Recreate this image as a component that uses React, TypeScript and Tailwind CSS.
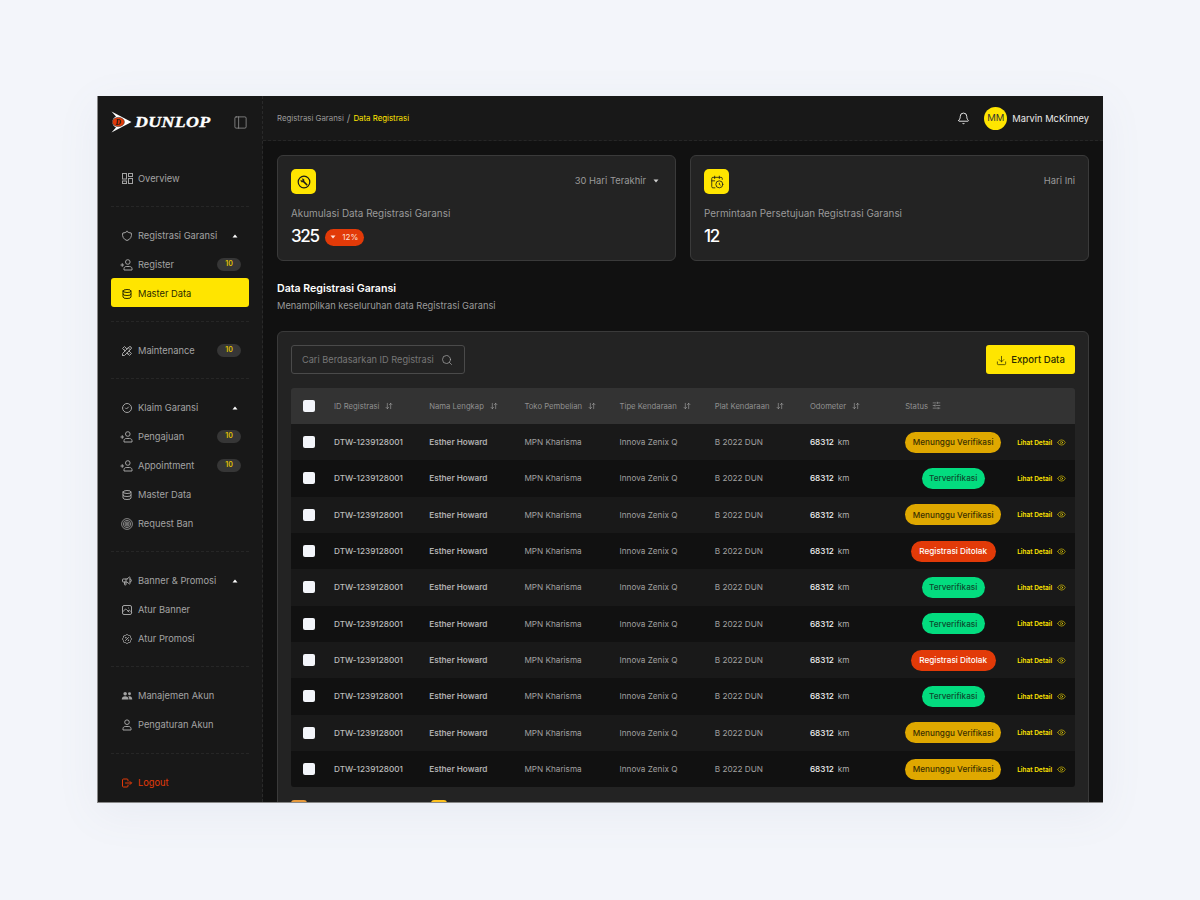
import React from "react";
import { PanelLeft, Bell, Search, Download, Eye, ArrowDownUp, SlidersHorizontal, CalendarClock } from "lucide-react";
import { TbShield, TbDatabase, TbTools, TbCircleCheck, TbSpeakerphone, TbPhoto, TbRosetteDiscount, TbLogout } from "react-icons/tb";

const Caret = ({ up = false, className = "" }: { up?: boolean; className?: string }) => (
  <svg width="6" height="4" viewBox="0 0 6 4" className={className}>
    <path d={up ? "M3 0.5L5.5 3.5H0.5Z" : "M3 3.5L5.5 0.5H0.5Z"} fill="currentColor" />
  </svg>
);

const Target = () => (
  <svg width="12" height="12" viewBox="0 0 12 12" fill="none" stroke="currentColor" strokeWidth="0.8">
    <circle cx="6" cy="6" r="5.4" />
    <circle cx="6" cy="6" r="3.6" />
    <circle cx="6" cy="6" r="2" />
    <circle cx="6" cy="6" r="0.7" />
  </svg>
);

const DashIcon = () => (
  <svg width="11" height="11" viewBox="0 0 11 11" fill="none" stroke="currentColor" strokeWidth="1">
    <rect x="0.5" y="0.5" width="4" height="5.5" />
    <rect x="6.5" y="0.5" width="4" height="3" />
    <rect x="0.5" y="8" width="4" height="2.5" />
    <rect x="6.5" y="5.5" width="4" height="5" />
  </svg>
);

const UserPlus = () => (
  <svg width="13" height="12" viewBox="0 0 13 12" fill="none" stroke="currentColor" strokeWidth="1" className="-ml-[1px]">
    <circle cx="7.8" cy="3" r="2.3" />
    <path d="M4 11V9.6C4 8.4 5 7.5 6.2 7.5H9.6C11 7.5 12 8.4 12 9.6V11Z" />
    <path d="M0.5 6H4M2.25 4.2V7.8" />
  </svg>
);

const UserIcon = () => (
  <svg width="12" height="12" viewBox="0 0 12 12" fill="none" stroke="currentColor" strokeWidth="1">
    <circle cx="6" cy="3.2" r="2.3" />
    <path d="M2 11V9.6C2 8.4 3 7.5 4.2 7.5H7.8C9 7.5 10 8.4 10 9.6V11Z" />
  </svg>
);

const UsersIcon = () => (
  <svg width="13" height="12" viewBox="0 0 13 12" fill="currentColor">
    <circle cx="4.5" cy="3.5" r="1.9" />
    <circle cx="9.2" cy="3.5" r="1.6" />
    <path d="M0.8 9.8C0.8 7.5 2.5 6.3 4.5 6.3C6.5 6.3 8.2 7.5 8.2 9.8Z" />
    <path d="M9 9.8C9 8.3 8.6 7.2 7.8 6.5C8.2 6.3 8.7 6.2 9.2 6.2C11 6.2 12.2 7.5 12.2 9.8Z" />
  </svg>
);

const WrenchCircle = () => (
  <svg width="14" height="14" viewBox="0 0 14 14" fill="none" stroke="currentColor">
    <circle cx="7" cy="7" r="5.8" strokeWidth="1.2" />
    <path d="M6.4 6.4L9.8 9.8" strokeWidth="1.6" strokeLinecap="round" />
    <path d="M3.9 5.1L5 6.1L6.1 5L5.1 3.9C6.2 3.5 7.4 4.4 7.1 5.6L5.6 7.1C4.4 7.4 3.5 6.2 3.9 5.1Z" fill="currentColor" strokeWidth="0.4" />
  </svg>
);

const Logo = () => (
  <div className="flex items-center">
    <svg width="21" height="22" viewBox="0 0 21 22">
      <path d="M0.5 0.5L20.5 11L0.5 21.5L5 16.5A7.4 6.4 0 0 1 5 5.5Z" fill="#fff" />
      <ellipse cx="7.4" cy="11" rx="6" ry="4.6" fill="#e23a08" stroke="#161616" strokeWidth="0.5" />
      <text x="7.2" y="13.6" fontSize="7.5" fontWeight="900" fontStyle="italic" textAnchor="middle" fill="#161616" fontFamily="Liberation Serif, serif">D</text>
    </svg>
    <span className="ml-[3px] origin-left scale-x-[1.19] font-['Liberation_Serif',serif] text-[15px] font-black italic leading-none tracking-[0.3px] text-white [-webkit-text-stroke:0.35px_white]">DUNLOP</span>
  </div>
);

const Badge = () => (
  <span className="ml-auto mr-[8px] flex h-[13px] w-[24px] items-center justify-center rounded-full bg-[#363636] text-[7px] font-semibold text-[#e2c200]">10</span>
);

const Item = ({ icon, label, badge, caret, active, danger }: { icon: React.ReactNode; label: string; badge?: boolean; caret?: boolean; active?: boolean; danger?: boolean }) => (
  <div className={`flex h-[29px] items-center gap-[5px] rounded-[3px] pl-[10px] pt-[2px] text-[9.3px] ${active ? "bg-[#ffe500] text-[#2b2b00]" : danger ? "text-[#e23a08]" : "text-[#a3a3a3]"}`}>
    <span className="flex w-[12px] justify-center text-[14px]">{icon}</span>
    <span>{label}</span>
    {badge && <Badge />}
    {caret && <Caret up className="ml-auto mr-[11px] text-white" />}
  </div>
);

const Divider = ({ tall = false }: { tall?: boolean }) => (
  <div className={`border-t border-dashed border-[#262626] mb-[13px] ${tall ? "mt-[15px]" : "mt-[14px]"}`} />
);

const Sidebar = () => (
  <aside className="flex w-[165px] shrink-0 flex-col border-r border-dashed border-[#2a2a2a] bg-[#181818] px-[13px]">
    <div className="flex h-[52px] items-center justify-between pr-[1px]">
      <Logo />
      <PanelLeft size={15} strokeWidth={1.2} className="text-[#9a9a9a]" />
    </div>
    <div className="mt-[15px]">
      <Item icon={<DashIcon />} label="Overview" />
      <Divider />
      <Item icon={<TbShield />} label="Registrasi Garansi" caret />
      <Item icon={<UserPlus />} label="Register" badge />
      <Item icon={<TbDatabase />} label="Master Data" active />
      <Divider />
      <Item icon={<TbTools />} label="Maintenance" badge />
      <Divider />
      <Item icon={<TbCircleCheck />} label="Klaim Garansi" caret />
      <Item icon={<UserPlus />} label="Pengajuan" badge />
      <Item icon={<UserPlus />} label="Appointment" badge />
      <Item icon={<TbDatabase />} label="Master Data" />
      <Item icon={<Target />} label="Request Ban" />
      <Divider />
      <Item icon={<TbSpeakerphone />} label="Banner & Promosi" caret />
      <Item icon={<TbPhoto />} label="Atur Banner" />
      <Item icon={<TbRosetteDiscount />} label="Atur Promosi" />
      <Divider />
      <Item icon={<UsersIcon />} label="Manajemen Akun" />
      <Item icon={<UserIcon />} label="Pengaturan Akun" />
      <Divider tall />
      <Item icon={<TbLogout />} label="Logout" danger />
    </div>
  </aside>
);

const Header = () => (
  <header className="flex h-[45px] shrink-0 items-center justify-between border-b border-dashed border-[#262626] bg-[#181818] px-[14px] pt-[1px]">
    <div className="flex items-center gap-[3px] text-[7.85px] text-[#9a9a9a]">
      <span>Registrasi Garansi</span>
      <span className="text-[10px]">/</span>
      <span className="text-[#ffe500]">Data Registrasi</span>
    </div>
    <div className="flex items-center">
      <Bell size={13} strokeWidth={1.6} className="mr-[14px] text-white" />
      <span className="flex h-[23px] w-[23px] items-center justify-center rounded-full bg-[#ffe500] text-[9.5px] text-[#333]">MM</span>
      <span className="ml-[5px] text-[9.3px] text-[#eaeaea]">Marvin McKinney</span>
    </div>
  </header>
);

const StatCard = ({ icon, right, title, children }: { icon: React.ReactNode; right: React.ReactNode; title: string; children: React.ReactNode }) => (
  <div className="h-[106px] flex-1 rounded-[6px] border border-[#3a3a3a] bg-[#232323] px-[13px] pt-[13px]">
    <div className="flex items-center justify-between">
      <span className="flex h-[25px] w-[25px] items-center justify-center rounded-[5px] bg-[#ffe500] text-[#1a1a1a]">{icon}</span>
      {right}
    </div>
    <div className="mt-[13px] text-[9.9px] leading-[12px] text-[#9a9a9a]">{title}</div>
    <div className="mt-[9px] flex h-[18px] items-center gap-[6px]">{children}</div>
  </div>
);

const Sort = () => <ArrowDownUp size={8} strokeWidth={1.6} className="text-[#b5b5b5]" />;
const gridCols = "grid grid-cols-[43px_95.2px_95.2px_95.2px_95.2px_95.2px_95.2px_112px_1fr] items-center";

const statuses = ["w", "v", "w", "r", "v", "v", "r", "v", "w", "w"];
const Pill = ({ s }: { s: string }) => {
  const m: Record<string, [string, string]> = {
    w: ["Menunggu Verifikasi", "bg-[#dfa800] text-[#3a2f00] w-[96px]"],
    v: ["Terverifikasi", "bg-[#03dc7f] text-[#0c4a2e] w-[63px]"],
    r: ["Registrasi Ditolak", "bg-[#e23a08] text-white w-[85px]"],
  };
  return (
    <span className={`flex h-[21px] items-center justify-center whitespace-nowrap rounded-full text-[8.2px] font-medium ${m[s][1]}`}>{m[s][0]}</span>
  );
};

const Check = () => <span className="ml-[12px] block h-[12px] w-[12px] rounded-[2px] bg-[#f3f5fa]" />;

const Table = () => (
  <div className="mt-[14px] overflow-hidden rounded-[3px]">
    <div className={`${gridCols} h-[36px] bg-[#333333] text-[7.7px] text-[#8f8f8f]`}>
      <Check />
      {["ID Registrasi", "Nama Lengkap", "Toko Pembelian", "Tipe Kendaraan", "Plat Kendaraan", "Odometer"].map((h) => (
        <div key={h} className="flex items-center gap-[6px]"><span className="pt-[2px]">{h}</span><Sort /></div>
      ))}
      <div className="flex items-center gap-[4px]"><span className="pt-[2px]">Status</span><SlidersHorizontal size={9} strokeWidth={1.4} className="text-[#b5b5b5]" /></div>
      <div />
    </div>
    {statuses.map((s, i) => (
      <div key={i} className={`${gridCols} h-[36.33px] text-[8.2px] ${i % 2 === 0 ? "bg-[#191919]" : "bg-[#111111]"}`}>
        <Check />
        <div className="font-medium text-[#bdbdbd]">DTW-1239128001</div>
        <div className="font-semibold text-[#b0b0b0]">Esther Howard</div>
        <div className="text-[#a0a0a0]">MPN Kharisma</div>
        <div className="text-[#a0a0a0]">Innova Zenix Q</div>
        <div className="text-[#a0a0a0]">B 2022 DUN</div>
        <div className="flex gap-[4px]"><span className="font-medium text-[#f0f0f0]">68312</span><span className="text-[#b0b0b0]">km</span></div>
        <div className="flex w-[96px] justify-center"><Pill s={s} /></div>
        <div className="flex h-[9px] items-center gap-[5px] whitespace-nowrap text-[6.5px] font-semibold leading-[9px] text-[#ffe500]"><span className="pt-[2px]">Lihat Detail</span><Eye size={9} strokeWidth={1.4} /></div>
      </div>
    ))}
  </div>
);

export default function App() {
  return (
    <div className="flex min-h-[900px] justify-center bg-[#f3f5fa] pt-[96px] font-['Inter',sans-serif]">
      <div className="flex h-[707px] w-[1006px] overflow-hidden border-b border-l border-[#888] bg-[#111111] shadow-[0_10px_40px_rgba(120,130,160,0.08)]">
        <Sidebar />
        <main className="flex min-w-0 flex-1 flex-col">
          <Header />
          <div className="px-[14px] pt-[14px]">
            <div className="flex gap-[14px]">
              <StatCard
                icon={<WrenchCircle />}
                right={<span className="flex items-center gap-[7px] pr-[3px] text-[9.4px] text-[#9a9a9a]">30 Hari Terakhir <Caret className="text-[#cfcfcf]" /></span>}
                title="Akumulasi Data Registrasi Garansi"
              >
                <span className="text-[17px] font-medium tracking-[-1.3px] text-white">325</span>
                <span className="flex h-[17px] w-[39px] items-center justify-center gap-[6px] rounded-full bg-[#e23a08] text-[8px] text-[#ffe3da]"><Caret />12%</span>
              </StatCard>
              <StatCard
                icon={<CalendarClock size={14} strokeWidth={1.4} />}
                right={<span className="text-[9.4px] text-[#9a9a9a]">Hari Ini</span>}
                title="Permintaan Persetujuan Registrasi Garansi"
              >
                <span className="text-[17px] font-medium tracking-[-1.3px] text-white">12</span>
              </StatCard>
            </div>
            <div className="mt-[21px] text-[10.6px] font-semibold leading-[14px] text-white">Data Registrasi Garansi</div>
            <div className="mt-[3px] text-[9.3px] leading-[13px] text-[#9a9a9a]">Menampilkan keseluruhan data Registrasi Garansi</div>
            <div className="mt-[19px] rounded-t-[6px] border border-[#3a3a3a] bg-[#232323] px-[13px] pb-[40px] pt-[13px]">
              <div className="flex items-center justify-between">
                <div className="flex h-[29px] w-[174px] items-center justify-between rounded-[3px] border border-[#4a4a4a] pl-[10px] pr-[11px] text-[9.2px] text-[#777]">
                  <span className="whitespace-nowrap">Cari Berdasarkan ID Registrasi</span>
                  <Search size={12} strokeWidth={1.4} className="shrink-0 text-[#aaa]" />
                </div>
                <div className="flex h-[29px] w-[89px] items-center justify-center gap-[4px] rounded-[3px] bg-[#ffe500] pt-[1px] text-[9.6px] font-medium text-[#2b2b00]">
                  <Download size={11} strokeWidth={1.6} /> Export Data
                </div>
              </div>
              <Table />
              <div className="mt-[13px] flex gap-[124px]">
                <span className="h-[16px] w-[16px] rounded-[3px] bg-[#e89a3c]" />
                <span className="h-[16px] w-[16px] rounded-[3px] bg-[#ffc21f]" />
              </div>
            </div>
          </div>
        </main>
      </div>
    </div>
  );
}
